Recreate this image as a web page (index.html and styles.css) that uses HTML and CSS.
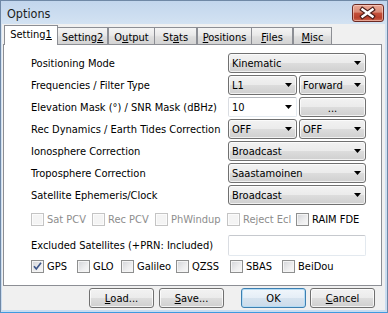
FILE: index.html
```html
<!DOCTYPE html>
<html>
<head>
<meta charset="utf-8">
<title>Options</title>
<link rel="stylesheet" href="styles.css">
</head>
<body>
<div class="window">
  <div class="titlebar">
    <span class="title">Options</span>
    <div class="close">
      <svg width="30" height="16" viewBox="0 0 30 16">
        <path d="M9.5 4.5 L19.5 11.5 M19.5 4.5 L9.5 11.5" stroke="#4a1c18" stroke-width="4.6" stroke-linecap="square" fill="none"/>
        <path d="M9.5 4.5 L19.5 11.5 M19.5 4.5 L9.5 11.5" stroke="#ffffff" stroke-width="2.4" stroke-linecap="square" fill="none"/>
      </svg>
    </div>
  </div>
  <div class="client">
    <div class="tabs">
      <div class="tab sel t1">Setting<u>1</u></div>
      <div class="tab t2">Setting<u>2</u></div>
      <div class="tab t3">O<u>u</u>tput</div>
      <div class="tab t4">St<u>a</u>ts</div>
      <div class="tab t5"><u>P</u>ositions</div>
      <div class="tab t6"><u>F</u>iles</div>
      <div class="tab t7"><u>M</u>isc</div>
    </div>
    <div class="panel">
      <div class="form">
        <div class="lbl">Positioning Mode</div>
        <div class="combo"><span>Kinematic</span><svg class="arr" width="7" height="4"><polygon points="0,0 7,0 3.5,4"/></svg></div>

        <div class="lbl">Frequencies / Filter Type</div>
        <div class="pair">
          <div class="combo"><span>L1</span><svg class="arr" width="7" height="4"><polygon points="0,0 7,0 3.5,4"/></svg></div>
          <div class="combo"><span>Forward</span><svg class="arr" width="7" height="4"><polygon points="0,0 7,0 3.5,4"/></svg></div>
        </div>

        <div class="lbl">Elevation Mask (°) / SNR Mask (dBHz)</div>
        <div class="pair">
          <div class="combo edit"><span>10</span><svg class="arr" width="7" height="4"><polygon points="0,0 7,0 3.5,4"/></svg></div>
          <div class="btn dots">...</div>
        </div>

        <div class="lbl">Rec Dynamics / Earth Tides Correction</div>
        <div class="pair">
          <div class="combo"><span>OFF</span><svg class="arr" width="7" height="4"><polygon points="0,0 7,0 3.5,4"/></svg></div>
          <div class="combo"><span>OFF</span><svg class="arr" width="7" height="4"><polygon points="0,0 7,0 3.5,4"/></svg></div>
        </div>

        <div class="lbl">Ionosphere Correction</div>
        <div class="combo"><span>Broadcast</span><svg class="arr" width="7" height="4"><polygon points="0,0 7,0 3.5,4"/></svg></div>

        <div class="lbl">Troposphere Correction</div>
        <div class="combo"><span>Saastamoinen</span><svg class="arr" width="7" height="4"><polygon points="0,0 7,0 3.5,4"/></svg></div>

        <div class="lbl">Satellite Ephemeris/Clock</div>
        <div class="combo"><span>Broadcast</span><svg class="arr" width="7" height="4"><polygon points="0,0 7,0 3.5,4"/></svg></div>
      </div>

      <div class="checks row1">
        <div class="chk dis"><i class="box"></i><span>Sat PCV</span></div>
        <div class="chk dis"><i class="box"></i><span>Rec PCV</span></div>
        <div class="chk dis"><i class="box"></i><span>PhWindup</span></div>
        <div class="chk dis"><i class="box"></i><span>Reject Ecl</span></div>
        <div class="chk"><i class="box"></i><span>RAIM FDE</span></div>
      </div>

      <div class="excl">
        <div class="lbl">Excluded Satellites (+PRN: Included)</div>
        <div class="input"></div>
      </div>

      <div class="checks row2">
        <div class="chk"><i class="box on"><svg width="11" height="11" viewBox="0 0 11 11"><path d="M2 5.2 L4.3 8 L9 1.8" stroke="#3d5689" stroke-width="1.7" fill="none"/></svg></i><span>GPS</span></div>
        <div class="chk"><i class="box"></i><span>GLO</span></div>
        <div class="chk"><i class="box"></i><span>Galileo</span></div>
        <div class="chk"><i class="box"></i><span>QZSS</span></div>
        <div class="chk"><i class="box"></i><span>SBAS</span></div>
        <div class="chk"><i class="box"></i><span>BeiDou</span></div>
      </div>
    </div>
    <div class="buttons">
      <div class="btn b-load"><u>L</u>oad...</div>
      <div class="btn b-save"><u>S</u>ave...</div>
      <div class="btn def b-ok">OK</div>
      <div class="btn b-cancel"><u>C</u>ancel</div>
    </div>
  </div>
</div>
</body>
</html>
```

FILE: styles.css
```css
html, body {
  margin: 0;
  padding: 0;
  background: #ffffff;
}

.window {
  box-sizing: border-box;
  width: 388px;
  height: 313px;
  border: 1px solid #6f88a6;
  border-bottom-color: #3f9ae0;
  background: linear-gradient(#c2d6ed 0px, #d3e2f2 23px, #c9dcf0 100%);
  display: flex;
  flex-direction: column;
  font-family: "DejaVu Sans Condensed", "DejaVu Sans", sans-serif;
  font-stretch: condensed;
  font-size: 11px;
  color: #000;
}

.titlebar {
  height: 23px;
  display: flex;
  justify-content: space-between;
  align-items: flex-start;
  padding-top: 3px;
  box-sizing: border-box;
}

.title {
  padding-left: 6px;
  font-size: 12.5px;
  line-height: 20px;
  color: #1c1c1c;
}

.close {
  box-sizing: border-box;
  width: 32px;
  height: 18px;
  margin-right: 3px;
  border: 1px solid #6b2a24;
  border-radius: 3px;
  background: linear-gradient(#eaa896 0%, #d98a76 45%, #c4503a 50%, #b8402c 80%, #cf6a52 100%);
  box-shadow: inset 0 0 0 1px rgba(255, 220, 210, 0.55);
  display: flex;
  align-items: center;
  justify-content: center;
}

.close svg {
  display: block;
}

.client {
  flex: 1;
  margin: 0 2px 2px 1px;
  background: #f0f0f0;
  display: flex;
  flex-direction: column;
}

.tabs {
  height: 20px;
  display: flex;
  align-items: flex-end;
  padding-left: 2px;
  position: relative;
  z-index: 2;
}

.tab {
  box-sizing: border-box;
  height: 17px;
  border: 1px solid #8c8e94;
  border-bottom: none;
  background: linear-gradient(#f4f4f4, #e9e9e9 45%, #dedede 55%, #d3d3d3);
  text-align: center;
  line-height: 17px;
  padding-top: 1px;
}

.tab.sel {
  height: 20px;
  margin-bottom: -1px;
  background: #ffffff;
  line-height: 18px;
  padding-top: 0;
}

.t1 { width: 54px; }
.t2 { width: 50px; border-left: none; }
.t3 { width: 47px; }
.t4 { width: 42px; border-left: none; }
.t5 { width: 55px; }
.t6 { width: 41px; border-left: none; }
.t7 { width: 39px; }

.panel {
  box-sizing: border-box;
  margin-left: 1px;
  width: 379px;
  height: 242px;
  border: 1px solid #8c8e94;
  background: #ffffff;
  padding: 8px 15px 0 27px;
  position: relative;
  z-index: 1;
}

.form {
  display: grid;
  grid-template-columns: 1fr 138px;
  grid-auto-rows: 20px;
  row-gap: 2px;
}

.lbl {
  display: flex;
  align-items: center;
  white-space: nowrap;
}

.pair {
  display: grid;
  grid-template-columns: 69px 67px;
  column-gap: 2px;
}

.combo {
  box-sizing: border-box;
  height: 20px;
  border: 1px solid #707070;
  border-radius: 3px;
  background: linear-gradient(#f2f2f2 0%, #ebebeb 50%, #dddddd 50%, #cfcfcf 100%);
  box-shadow: inset 0 0 0 1px rgba(255, 255, 255, 0.7);
  display: flex;
  align-items: center;
  justify-content: space-between;
  padding: 0 4px 0 3px;
}

.combo.edit {
  background: #ffffff;
  border-color: #dadde2 #e3e9ef #e3e9ef #dadde2;
  border-top-color: #b5b8bd;
  box-shadow: none;
  border-radius: 2px;
}

.arr {
  display: block;
  fill: #000;
}

.btn {
  box-sizing: border-box;
  height: 20px;
  border: 1px solid #707070;
  border-radius: 3px;
  background: linear-gradient(#f2f2f2 0%, #ebebeb 50%, #dddddd 50%, #cfcfcf 100%);
  box-shadow: inset 0 0 0 1px rgba(255, 255, 255, 0.75);
  display: flex;
  align-items: center;
  justify-content: center;
}

.btn.dots {
  padding-top: 3px;
}

.checks {
  display: grid;
  height: 13px;
  align-items: center;
}

.row1 {
  margin-top: 8px;
  grid-template-columns: 61px 63px 72px 69px auto;
}

.row2 {
  margin-top: 4px;
  grid-template-columns: 46px 44px 55px 54px 52px auto;
}

.chk {
  display: flex;
  align-items: center;
  gap: 3px;
  white-space: nowrap;
}

.box {
  box-sizing: border-box;
  width: 13px;
  height: 13px;
  border: 1px solid #8e8f8f;
  background: linear-gradient(135deg, #d2d4d8 0%, #eeeeef 60%, #f8f8f8 100%);
  box-shadow: inset 0 0 0 1px #f4f4f4;
  display: flex;
  align-items: center;
  justify-content: center;
}

.box svg {
  display: block;
}

.chk.dis {
  color: #8d8d8d;
}

.chk.dis .box {
  border-color: #c4c4c4;
  background: #f4f4f4;
  box-shadow: inset 0 0 0 1px #fbfbfb;
}

.excl {
  margin-top: 9px;
  display: grid;
  grid-template-columns: 1fr 138px;
  height: 21px;
}

.input {
  box-sizing: border-box;
  height: 21px;
  border: 1px solid #e3e9ef;
  border-top-color: #c6c9ce;
  border-left-color: #dadde2;
  border-radius: 2px;
  background: #fff;
}

.buttons {
  display: flex;
  margin-top: 2px;
  padding-left: 87px;
}

.buttons .btn {
  width: 65px;
}

.b-save { margin-left: 5px; }
.b-ok { margin-left: 17px; }
.b-cancel { margin-left: 4px; }

.btn.def {
  border-color: #3c7fb1;
  background: linear-gradient(#f0f6fb 0%, #e5eef7 50%, #d6e3ef 50%, #cbdbea 100%);
  box-shadow: inset 0 0 0 1px #b4dcf5;
}

u {
  text-decoration: underline;
  text-underline-offset: 1px;
}
```
